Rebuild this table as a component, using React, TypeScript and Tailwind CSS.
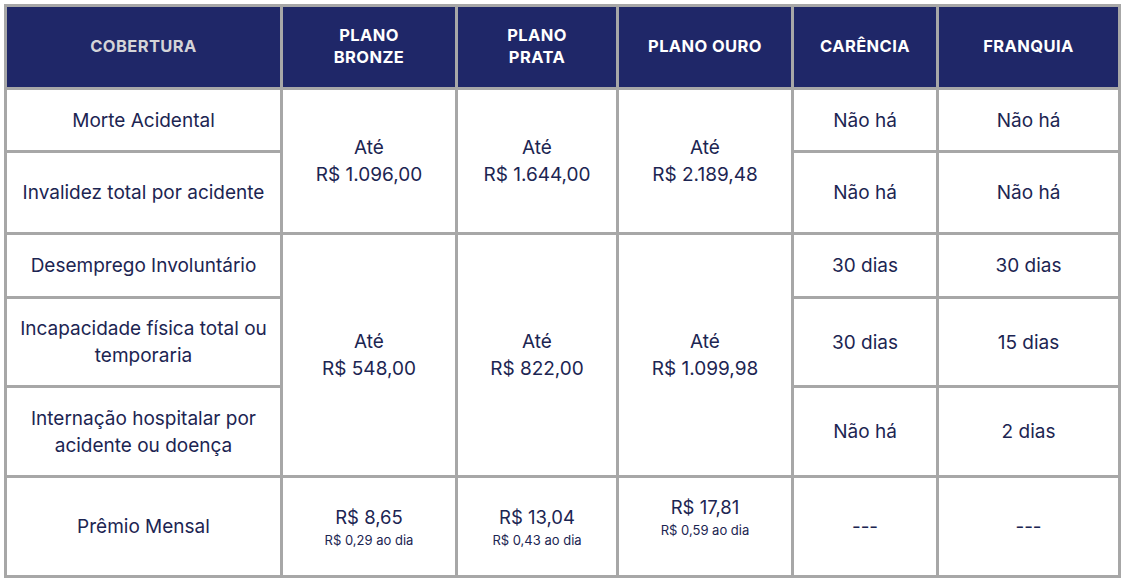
const navy = 'text-[#1c2552]'

function Head({ children, muted }: { children: React.ReactNode; muted?: boolean }) {
  return (
    <div
      className={`flex items-center justify-center bg-[#1f2768] pb-[2px] text-center text-[16.5px] font-bold uppercase leading-[22px] tracking-[0.4px] ${
        muted ? 'text-[#d4d4d8]' : 'text-white'
      }`}
    >
      {children}
    </div>
  )
}

function Cell({ children, className = '' }: { children: React.ReactNode; className?: string }) {
  return (
    <div className={`flex flex-col items-center justify-center bg-white text-center text-[19px] leading-[27px] ${navy} ${className}`}>
      {children}
    </div>
  )
}

function Premio({ value, day, up }: { value: string; day: string; up?: boolean }) {
  return (
    <Cell className={up ? 'pb-[20px]' : ''}>
      <span className="text-[18.5px] leading-[26px]">{value}</span>
      <span className="text-[13px] leading-[20px]">{day}</span>
    </Cell>
  )
}

export default function App() {
  return (
    <div className="bg-white pl-[4px] pt-[4px]" style={{ fontFamily: 'Inter, "Noto Sans", sans-serif' }}>
      <div className="grid w-fit grid-cols-[273px_172px_158px_172px_142px_179px] grid-rows-[80px_60px_79px_61px_86px_87px_97px] gap-[3px] bg-[#a7a7a7] p-[3px]">
        <Head muted>Cobertura</Head>
        <Head>Plano<br />Bronze</Head>
        <Head>Plano<br />Prata</Head>
        <Head>Plano Ouro</Head>
        <Head>Carência</Head>
        <Head>Franquia</Head>

        <Cell className="col-start-1 row-start-2">Morte Acidental</Cell>
        <Cell className="col-start-2 row-start-2 row-span-2">Até<br />R$ 1.096,00</Cell>
        <Cell className="col-start-3 row-start-2 row-span-2">Até<br />R$ 1.644,00</Cell>
        <Cell className="col-start-4 row-start-2 row-span-2">Até<br />R$ 2.189,48</Cell>
        <Cell className="col-start-5 row-start-2">Não há</Cell>
        <Cell className="col-start-6 row-start-2">Não há</Cell>

        <Cell className="col-start-1 row-start-3">Invalidez total por acidente</Cell>
        <Cell className="col-start-5 row-start-3">Não há</Cell>
        <Cell className="col-start-6 row-start-3">Não há</Cell>

        <Cell className="col-start-1 row-start-4">Desemprego Involuntário</Cell>
        <Cell className="col-start-2 row-start-4 row-span-3">Até<br />R$ 548,00</Cell>
        <Cell className="col-start-3 row-start-4 row-span-3">Até<br />R$ 822,00</Cell>
        <Cell className="col-start-4 row-start-4 row-span-3">Até<br />R$ 1.099,98</Cell>
        <Cell className="col-start-5 row-start-4">30 dias</Cell>
        <Cell className="col-start-6 row-start-4">30 dias</Cell>

        <Cell className="col-start-1 row-start-5">Incapacidade física total ou<br />temporaria</Cell>
        <Cell className="col-start-5 row-start-5">30 dias</Cell>
        <Cell className="col-start-6 row-start-5">15 dias</Cell>

        <Cell className="col-start-1 row-start-6">Internação hospitalar por<br />acidente ou doença</Cell>
        <Cell className="col-start-5 row-start-6">Não há</Cell>
        <Cell className="col-start-6 row-start-6">2 dias</Cell>

        <Cell className="col-start-1 row-start-7">Prêmio Mensal</Cell>
        <Premio value="R$ 8,65" day="R$ 0,29 ao dia" />
        <Premio value="R$ 13,04" day="R$ 0,43 ao dia" />
        <Premio value="R$ 17,81" day="R$ 0,59 ao dia" up />
        <Cell>---</Cell>
        <Cell>---</Cell>
      </div>
    </div>
  )
}
